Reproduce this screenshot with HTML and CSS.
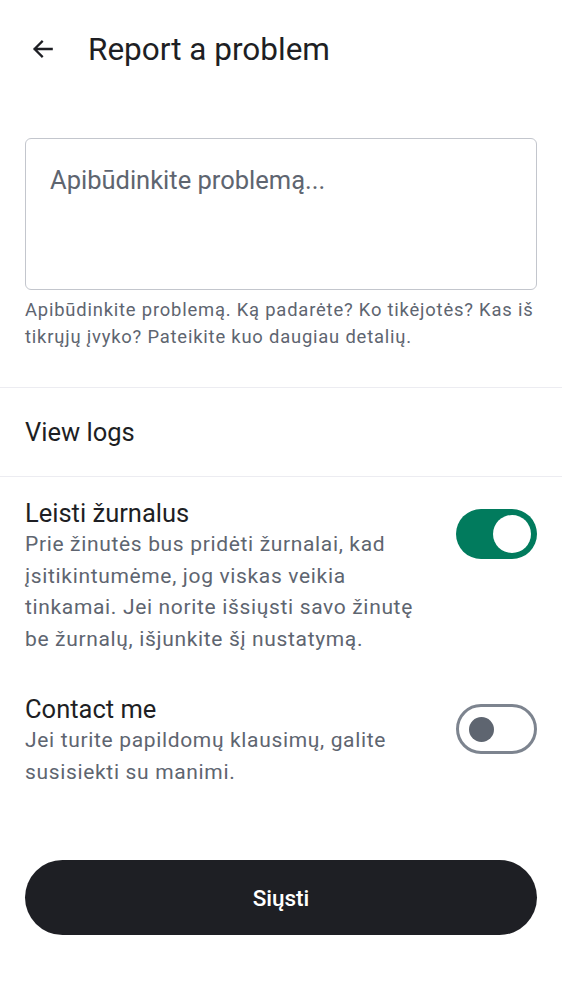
FILE: index.html
```html
<!DOCTYPE html>
<html lang="lt">
<head>
<meta charset="utf-8">
<link rel="stylesheet" href="styles.css">
</head>
<body>
<div class="screen">
  <header class="appbar">
    <button class="back" aria-label="Back">
      <svg width="26" height="26" viewBox="0 0 24 24"><path d="M20 12H4.5M11 5.2L4.2 12l6.8 6.8" fill="none" stroke="#1e1f24" stroke-width="2.1" stroke-linecap="square"/></svg>
    </button>
    <h1 class="title">Report a problem</h1>
  </header>

  <section class="field-block">
    <div class="field">
      <span class="placeholder">Apibūdinkite problemą...</span>
    </div>
    <p class="helper">Apibūdinkite problemą. Ką padarėte? Ko tikėjotės? Kas iš tikrųjų įvyko? Pateikite kuo daugiau detalių.</p>
  </section>

  <div class="list-row">View logs</div>

  <section class="settings">
    <div class="setting">
      <div class="setting-text">
        <div class="setting-title">Leisti žurnalus</div>
        <div class="setting-desc">Prie žinutės bus pridėti žurnalai, kad įsitikintumėme, jog viskas veikia tinkamai. Jei norite išsiųsti savo žinutę be žurnalų, išjunkite šį nustatymą.</div>
      </div>
      <div class="switch on"><span class="thumb"></span></div>
    </div>
    <div class="setting">
      <div class="setting-text">
        <div class="setting-title">Contact me</div>
        <div class="setting-desc">Jei turite papildomų klausimų, galite susisiekti su manimi.</div>
      </div>
      <div class="switch off"><span class="thumb"></span></div>
    </div>
  </section>

  <div class="actions">
    <button class="send">Siųsti</button>
  </div>
</div>
</body>
</html>
```

FILE: styles.css
```css
* { box-sizing: border-box; }
html, body { margin: 0; padding: 0; background: #ffffff; }
body {
  font-family: Roboto, "Noto Sans", "Liberation Sans", sans-serif;
  color: #1e1f24;
}
.screen { width: 562px; }

.appbar {
  display: flex;
  align-items: center;
  height: 98px;
  padding: 0 25px 0 30px;
  gap: 32px;
}
.back {
  border: 0;
  background: none;
  padding: 0;
  width: 26px;
  height: 26px;
  display: flex;
  align-items: center;
  justify-content: center;
}
.title {
  margin: 0;
  font-size: 31.5px;
  font-weight: 400;
  letter-spacing: 0;
  color: #1e1f24;
}

.field-block { padding: 40px 25px 0; }
.field {
  height: 152px;
  border: 1.5px solid #c3c6cd;
  border-radius: 6px;
  padding: 26px 24px;
}
.placeholder {
  font-size: 25.5px;
  color: #5e6570;
  line-height: 30px;
}
.helper {
  margin: 6px 0 0;
  font-size: 18.4px;
  line-height: 27px;
  letter-spacing: 0.8px;
  color: #5e6570;
}

.list-row {
  margin-top: 37px;
  border-top: 1.5px solid #ececf1;
  border-bottom: 1.5px solid #ececf1;
  height: 90px;
  display: flex;
  align-items: center;
  padding: 0 25px;
  font-size: 25.5px;
  color: #1e1f24;
}

.settings { padding: 20px 25px 0; display: flex; flex-direction: column; gap: 38px; }
.setting { display: flex; align-items: flex-start; gap: 20px; }
.setting-text { flex: 1; }
.setting-title { font-size: 25.5px; line-height: 32px; color: #1e1f24; }
.setting-desc { font-size: 21px; line-height: 31.5px; letter-spacing: 0.66px; color: #5e6570; }

.switch {
  flex: none;
  width: 81px;
  height: 50px;
  border-radius: 25px;
  margin-top: 12px;
  display: flex;
  align-items: center;
  position: relative;
}
.switch.on { background: #017b5d; justify-content: flex-end; padding-right: 6px; }
.switch.on .thumb { width: 38px; height: 38px; border-radius: 50%; background: #ffffff; }
.switch.off { border: 3px solid #7d848f; background: #ffffff; padding-left: 10px; margin-top: 11px; }
.switch.off .thumb { width: 25px; height: 25px; border-radius: 50%; background: #5e6570; }

.actions { padding: 72px 25px 0; }
.send {
  width: 100%;
  height: 75px;
  border: 0;
  border-radius: 38px;
  background: #1e1f24;
  color: #ffffff;
  font-family: Roboto, "Noto Sans", sans-serif;
  font-size: 22.5px;
  font-weight: 500;
}
```
